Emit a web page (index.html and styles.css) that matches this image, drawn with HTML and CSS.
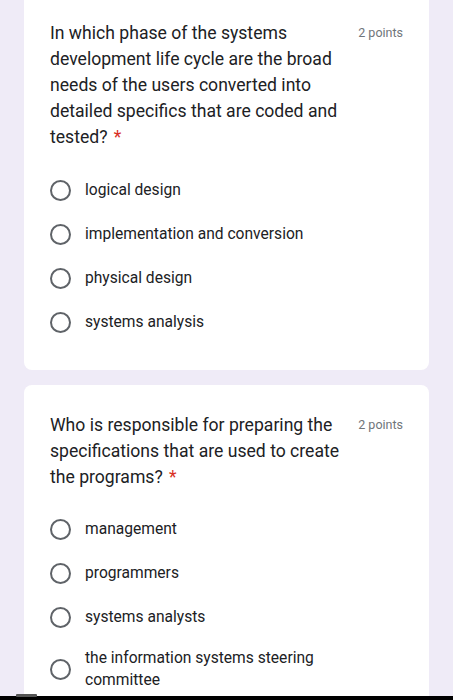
FILE: index.html
```html
<!DOCTYPE html>
<html>
<head>
<meta charset="utf-8">
<link rel="stylesheet" href="styles.css">
</head>
<body>
<div class="page">
  <div class="card first">
    <div class="head">
      <div class="question">In which phase of the systems development life cycle are the broad needs of the users converted into detailed specifics that are coded and tested?&nbsp;<span class="req">*</span></div>
      <div class="points">2 points</div>
    </div>
    <div class="options">
      <div class="opt"><span class="radio"></span><span class="label">logical design</span></div>
      <div class="opt"><span class="radio"></span><span class="label">implementation and conversion</span></div>
      <div class="opt"><span class="radio"></span><span class="label">physical design</span></div>
      <div class="opt"><span class="radio"></span><span class="label">systems analysis</span></div>
    </div>
  </div>
  <div class="card second">
    <div class="head">
      <div class="question">Who is responsible for preparing the specifications that are used to create the programs?&nbsp;<span class="req">*</span></div>
      <div class="points">2 points</div>
    </div>
    <div class="options">
      <div class="opt"><span class="radio"></span><span class="label">management</span></div>
      <div class="opt"><span class="radio"></span><span class="label">programmers</span></div>
      <div class="opt"><span class="radio"></span><span class="label">systems analysts</span></div>
      <div class="opt"><span class="radio"></span><span class="label narrow">the information systems steering committee</span></div>
    </div>
  </div>
</div>
<div class="navbar"><span class="nav-handle"></span></div>
</body>
</html>
```
FILE: styles.css
```css
html, body {
  margin: 0;
  padding: 0;
  height: 700px;
  overflow: hidden;
  background: #efebf7;
}
.page {
  padding: 0 24px;
  display: flex;
  flex-direction: column;
  gap: 15px;
}
.card {
  background: #ffffff;
  border-radius: 8px;
  padding: 27px 26px 26px 26px;
}
.card.first {
  margin-top: -7px;
}
.card.second {
  height: 700px;
}
.head {
  display: flex;
  justify-content: space-between;
  align-items: flex-start;
}
.question {
  font-family: Roboto, "Noto Sans", sans-serif;
  font-size: 17.6px;
  line-height: 26px;
  color: #202124;
  width: 302px;
}
.req {
  color: #d93025;
  margin-left: 2px;
}
.points {
  font-family: Roboto, sans-serif;
  font-size: 12.5px;
  line-height: 26px;
  color: #70757a;
  white-space: nowrap;
}
.options {
  margin-top: 18px;
  display: flex;
  flex-direction: column;
}
.second .options {
  margin-top: 17px;
}
.opt {
  display: flex;
  align-items: center;
  padding: 8px 0;
  min-height: 28px;
}
.radio {
  width: 17px;
  height: 17px;
  border: 2.5px solid #5f6368;
  border-radius: 50%;
  flex: none;
  margin-right: 14px;
}
.label {
  font-family: Roboto, sans-serif;
  font-size: 15.6px;
  line-height: 22px;
  color: #202124;
}
.label.narrow {
  width: 270px;
}
.navbar {
  position: fixed;
  left: 0;
  right: 0;
  bottom: 0;
  height: 4px;
  background: #000;
}
.nav-handle {
  position: absolute;
  left: 16px;
  top: -2px;
  width: 21px;
  height: 3px;
  background: #555;
  border-radius: 1px;
}
```
